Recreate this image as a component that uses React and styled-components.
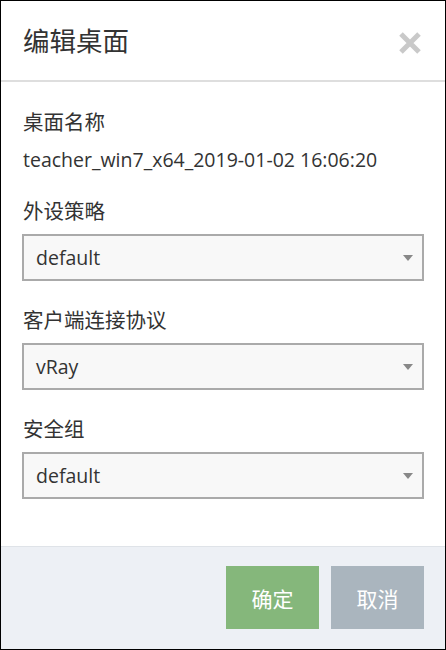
import React from "react";
import styled, { createGlobalStyle } from "styled-components";

const GlobalStyle = createGlobalStyle`
  html, body {
    margin: 0;
    padding: 0;
    background: #fff;
  }
  body {
    font-family: "Open Sans", "Noto Sans CJK SC", sans-serif;
    color: #333;
  }
`;

const fields = [
  { label: "外设策略", value: "default" },
  { label: "客户端连接协议", value: "vRay" },
  { label: "安全组", value: "default" },
];

const CloseIcon = () => (
  <svg width="24" height="24" viewBox="0 0 24 24">
    <path
      d="M3 3 L21 21 M21 3 L3 21"
      stroke="#c9c9c9"
      strokeWidth="5"
      strokeLinecap="butt"
    />
  </svg>
);

const Caret = () => (
  <svg width="10" height="6" viewBox="0 0 10 6">
    <path d="M0 0 H10 L5 6 Z" fill="#888" />
  </svg>
);

const Select = ({ value }) => (
  <SelectBox>
    <span>{value}</span>
    <Caret />
  </SelectBox>
);

const App = () => {
  return (
    <>
      <GlobalStyle />
      <Modal>
        <Header>
          <Title>编辑桌面</Title>
          <CloseButton>
            <CloseIcon />
          </CloseButton>
        </Header>
        <Body>
          <Field>
            <Label>桌面名称</Label>
            <Value>teacher_win7_x64_2019-01-02 16:06:20</Value>
          </Field>
          {fields.map((f) => (
            <Field key={f.label}>
              <Label select>{f.label}</Label>
              <Select value={f.value} />
            </Field>
          ))}
        </Body>
        <Footer>
          <Button primary>确定</Button>
          <Button>取消</Button>
        </Footer>
      </Modal>
    </>
  );
};

export default App;

const Modal = styled.div`
  box-sizing: border-box;
  width: 446px;
  height: 650px;
  border: 1px solid #000;
  display: flex;
  flex-direction: column;
  background: #fff;
`;

const Header = styled.div`
  height: 79px;
  border-bottom: 2px solid #dedede;
  display: flex;
  align-items: center;
  justify-content: space-between;
  padding: 0 23px 0 22px;
`;

const Title = styled.h2`
  margin: 0;
  font-size: 26.5px;
  font-weight: normal;
  line-height: 32px;
  color: #333;
`;

const CloseButton = styled.div`
  width: 24px;
  height: 24px;
  display: flex;
  margin-top: 4px;
`;

const Body = styled.div`
  flex: 1;
  padding: 28px 21px 0;
`;

const Field = styled.div`
  margin-bottom: 27px;
`;

const Label = styled.div`
  font-size: 20.5px;
  line-height: 24px;
  color: #333;
  padding-left: 1px;
  margin-bottom: ${(p) => (p.select ? "11px" : "14px")};
`;

const Value = styled.div`
  font-size: 19.5px;
  line-height: 24px;
  color: #333;
  padding-left: 1px;
`;

const SelectBox = styled.div`
  box-sizing: border-box;
  height: 47px;
  border: 2px solid #aaa;
  background: #f8f8f8;
  display: flex;
  align-items: center;
  justify-content: space-between;
  padding: 0 9px 0 12px;
  font-size: 19.5px;
  color: #333;
`;

const Footer = styled.div`
  box-sizing: border-box;
  height: 103px;
  border-top: 1px solid #dfe3e8;
  background: #edf0f5;
  display: flex;
  justify-content: flex-end;
  align-items: flex-start;
  gap: 12px;
  padding: 19px 21px 0 0;
`;

const Button = styled.div`
  width: 93px;
  height: 63px;
  display: flex;
  align-items: center;
  justify-content: center;
  font-size: 21px;
  color: #fff;
  background: ${(p) => (p.primary ? "#85b77b" : "#aab5be")};
`;
